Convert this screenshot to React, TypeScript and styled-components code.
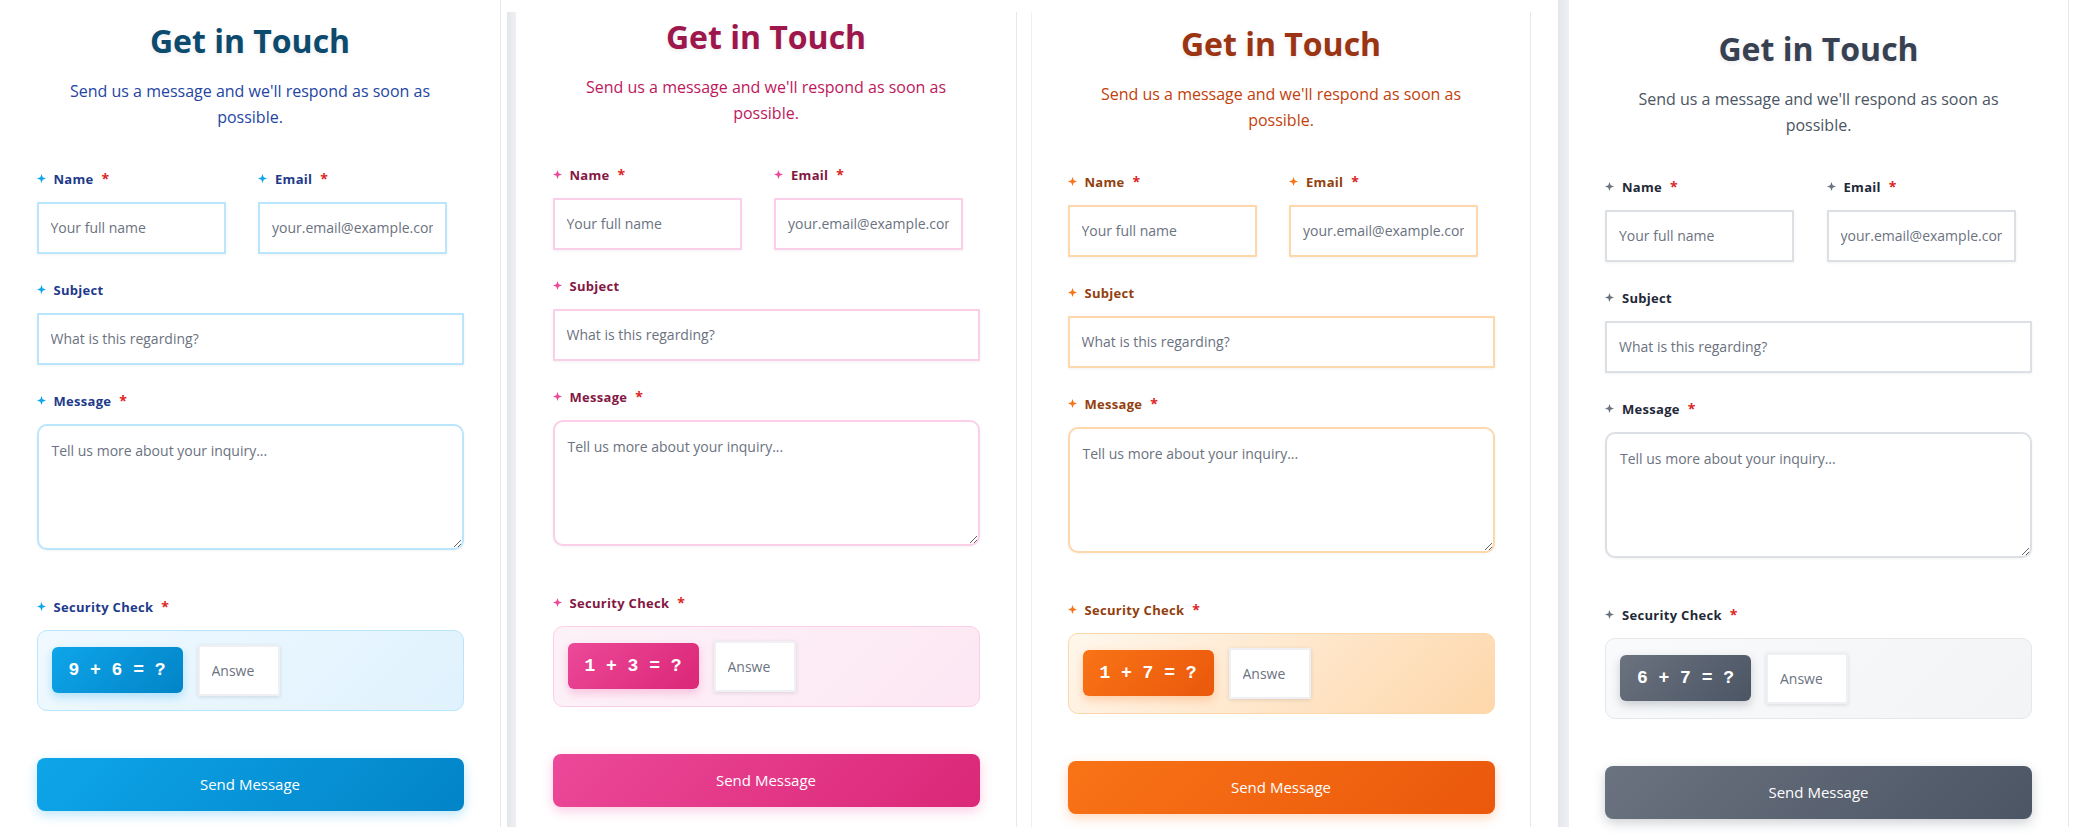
import React from 'react';
import styled, { createGlobalStyle, ThemeProvider } from 'styled-components';

interface Palette {
    title: string;
    subtitle: string;
    label: string;
    star: string;
    border: string;
    boxFrom: string;
    boxTo: string;
    boxBorder: string;
    from: string;
    to: string;
    glow: string;
}

const blue: Palette = {
    title: '#0c4a6e',
    subtitle: '#2545a3',
    label: '#1e3a8a',
    star: '#0ea5e9',
    border: '#bae6fd',
    boxFrom: '#f0f9ff',
    boxTo: '#e0f2fe',
    boxBorder: '#bae6fd',
    from: '#0ea5e9',
    to: '#0284c7',
    glow: 'rgba(14, 165, 233, 0.28)',
};

const pink: Palette = {
    title: '#9d174d',
    subtitle: '#be185d',
    label: '#831843',
    star: '#ec4899',
    border: '#fbcfe8',
    boxFrom: '#fdf2f8',
    boxTo: '#fce7f3',
    boxBorder: '#fbcfe8',
    from: '#ec4899',
    to: '#db2777',
    glow: 'rgba(236, 72, 153, 0.28)',
};

const orange: Palette = {
    title: '#9a3412',
    subtitle: '#c2410c',
    label: '#92400e',
    star: '#f97316',
    border: '#fed7aa',
    boxFrom: '#fff7ed',
    boxTo: '#fed7aa',
    boxBorder: '#fed7aa',
    from: '#f97316',
    to: '#ea580c',
    glow: 'rgba(249, 115, 22, 0.28)',
};

const slate: Palette = {
    title: '#374151',
    subtitle: '#4b5563',
    label: '#1f2937',
    star: '#6b7280',
    border: '#dcdfe4',
    boxFrom: '#f9fafb',
    boxTo: '#f3f4f6',
    boxBorder: '#e5e7eb',
    from: '#6b7280',
    to: '#4b5563',
    glow: 'rgba(75, 85, 99, 0.28)',
};

const GlobalStyle = createGlobalStyle`
  html, body {
    margin: 0;
    padding: 0;
    background: #ffffff;
  }
  body {
    font-family: "Open Sans", "Liberation Sans", sans-serif;
    overflow: hidden;
  }
  * { box-sizing: border-box; }
`;

const Page = styled.div`
  display: flex;
  align-items: flex-start;
  width: 2088px;
  height: 834px;
  overflow: hidden;
  background: #ffffff;
`;

const Frame = styled.div<{ $left: number; $top: number }>`
  display: flex;
  flex-shrink: 0;
  margin-left: ${p => p.$left}px;
  margin-top: ${p => p.$top}px;
  height: ${p => 827 - p.$top}px;
`;

const Strip = styled.div<{ $w: number }>`
  width: ${p => p.$w}px;
  background: linear-gradient(90deg, #e3e6eb, #eef0f4);
`;

const Card = styled.div<{ $w: number; $pad: number; $edge?: boolean }>`
  width: ${p => p.$w}px;
  padding-top: ${p => p.$pad}px;
  background: #ffffff;
  border-right: 1px solid #e6e8ec;
  border-left: ${p => (p.$edge ? '1px solid #eef0f3' : 'none')};
`;

const Form = styled.div`
  width: 427px;
  margin: 0 auto;
`;

const Title = styled.h2`
  margin: 0 0 19px;
  font-size: 32px;
  font-weight: 700;
  line-height: 1.2;
  text-align: center;
  color: ${p => p.theme.title};
  text-shadow: 0 2px 4px rgba(0, 0, 0, 0.08);
`;

const Subtitle = styled.p`
  max-width: 380px;
  margin: 0 auto 38px;
  font-size: 16px;
  line-height: 1.6;
  text-align: center;
  color: ${p => p.theme.subtitle};
`;

const Row = styled.div`
  display: grid;
  grid-template-columns: 1fr 1fr;
  gap: 16px;
`;

const Field = styled.div<{ $space?: number }>`
  margin-bottom: ${p => p.$space ?? 26}px;
`;

const Label = styled.label`
  display: flex;
  align-items: center;
  gap: 8px;
  height: 20px;
  margin-bottom: 13px;
  font-size: 13px;
  font-weight: 700;
  line-height: 20px;
  letter-spacing: 0.3px;
  color: ${p => p.theme.label};
`;

const Required = styled.span`
  color: #dc2626;
  font-size: 14px;
`;

const Input = styled.input<{ $w?: number }>`
  display: block;
  width: ${p => (p.$w ? `${p.$w}px` : '100%')};
  height: 52px;
  padding: 0 12px;
  border: 2px solid ${p => p.theme.border};
  border-radius: 1px;
  background: #ffffff;
  font-family: inherit;
  font-size: 14px;
  color: #111827;
  box-shadow: 0 1px 3px rgba(0, 0, 0, 0.06);
  outline: none;

  &::placeholder { color: #6b7280; }
`;

const TextArea = styled.textarea`
  display: block;
  width: 100%;
  height: 126px;
  padding: 14px 13px;
  border: 2px solid ${p => p.theme.border};
  border-radius: 10px;
  font-family: inherit;
  font-size: 14px;
  line-height: 1.5;
  resize: vertical;
  box-shadow: 0 1px 3px rgba(0, 0, 0, 0.05);
  outline: none;

  &::placeholder { color: #6b7280; }
`;

const CaptchaBox = styled.div`
  display: flex;
  align-items: center;
  gap: 15px;
  padding: 14px;
  border: 1px solid ${p => p.theme.boxBorder};
  border-radius: 10px;
  background: linear-gradient(135deg, ${p => p.theme.boxFrom}, ${p => p.theme.boxTo});
`;

const Puzzle = styled.div`
  display: flex;
  align-items: center;
  justify-content: center;
  width: 131px;
  height: 46px;
  border-radius: 6px;
  background: linear-gradient(135deg, ${p => p.theme.from}, ${p => p.theme.to});
  box-shadow: 0 4px 10px ${p => p.theme.glow};
  color: #ffffff;
  font-family: "Liberation Mono", "DejaVu Sans Mono", monospace;
  font-size: 18px;
  font-weight: 700;
  white-space: pre;
`;

const Answer = styled(Input)`
  height: 51px;
  padding: 0 24px 0 12px;
  border-color: #eef0f3;
  box-shadow: 0 1px 4px rgba(0, 0, 0, 0.12);
`;

const SendButton = styled.button`
  display: block;
  width: 100%;
  height: 53px;
  border: none;
  border-radius: 8px;
  background: linear-gradient(135deg, ${p => p.theme.from}, ${p => p.theme.to});
  box-shadow: 0 4px 12px ${p => p.theme.glow};
  color: #ffffff;
  font-family: inherit;
  font-size: 15px;
  font-weight: 500;
  cursor: pointer;
`;

const Star = () => {
    return (
        <svg width="9" height="9" viewBox="0 0 10 10">
            <path d="M5 0 L6.3 3.7 L10 5 L6.3 6.3 L5 10 L3.7 6.3 L0 5 L3.7 3.7 Z" fill="currentColor" />
        </svg>
    );
};

const StarWrap = styled.span`
  display: inline-flex;
  color: ${p => p.theme.star};
`;

const FieldLabel = ({ text, required }: { text: string; required?: boolean }) => (
    <Label>
        <StarWrap><Star /></StarWrap>
        {text}
        {required && <Required>*</Required>}
    </Label>
);

interface PanelProps {
    palette: Palette;
    puzzle: string;
    left: number;
    top: number;
    strip: number;
    width: number;
    pad: number;
    edge?: boolean;
}

const ContactPanel = ({ palette, puzzle, left, top, strip, width, pad, edge }: PanelProps) => {
    return (
        <ThemeProvider theme={palette}>
            <Frame $left={left} $top={top}>
                {strip > 0 && <Strip $w={strip} />}
                <Card $w={width} $pad={pad} $edge={edge}>
                    <Form>
                        <Title>Get in Touch</Title>
                        <Subtitle>Send us a message and we'll respond as soon as possible.</Subtitle>
                        <Row>
                            <Field>
                                <FieldLabel text="Name" required />
                                <Input $w={189} placeholder="Your full name" />
                            </Field>
                            <Field>
                                <FieldLabel text="Email" required />
                                <Input $w={189} placeholder="your.email@example.com" />
                            </Field>
                        </Row>
                        <Field>
                            <FieldLabel text="Subject" />
                            <Input placeholder="What is this regarding?" />
                        </Field>
                        <Field $space={47}>
                            <FieldLabel text="Message" required />
                            <TextArea placeholder="Tell us more about your inquiry..." />
                        </Field>
                        <Field $space={47}>
                            <FieldLabel text="Security Check" required />
                            <CaptchaBox>
                                <Puzzle>{puzzle}</Puzzle>
                                <Answer $w={82} placeholder="Answer" />
                            </CaptchaBox>
                        </Field>
                        <SendButton>Send Message</SendButton>
                    </Form>
                </Card>
            </Frame>
        </ThemeProvider>
    );
};

export default function App() {
    return (
        <Page>
            <GlobalStyle />
            <ContactPanel palette={blue} puzzle="9 + 6 = ?" left={0} top={0} strip={0} width={501} pad={22} />
            <ContactPanel palette={pink} puzzle="1 + 3 = ?" left={6} top={12} strip={9} width={501} pad={6} />
            <ContactPanel palette={orange} puzzle="1 + 7 = ?" left={14} top={12} strip={0} width={500} pad={13} edge />
            <ContactPanel palette={slate} puzzle="6 + 7 = ?" left={27} top={0} strip={11} width={500} pad={30} />
        </Page>
    );
}
